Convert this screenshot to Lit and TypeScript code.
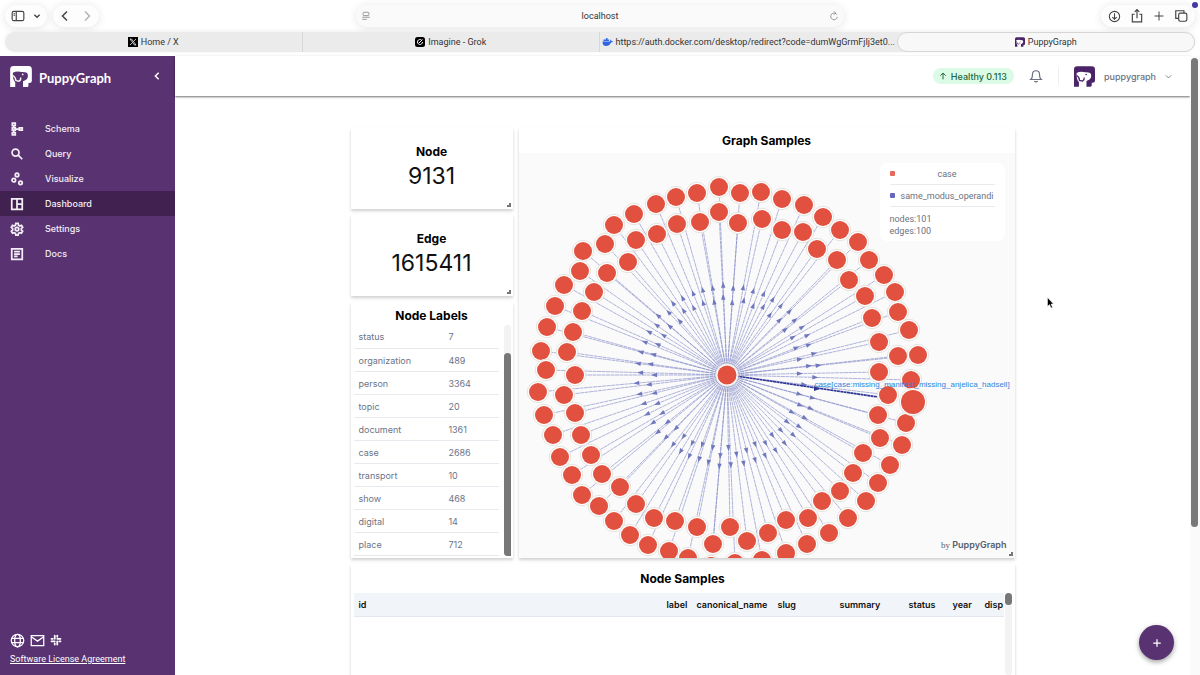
import { LitElement, html, svg, css } from "lit";
import { customElement } from "lit/decorators.js";
import { classMap } from "lit/directives/class-map.js";

const puppy = (fill: string, cut: string) => svg`
  <path fill=${fill} d="M10 0H54Q64 0 64 10V44Q64 50 57 50H54V58Q54 62 50 62H38V46H15V62H0V10Q0 0 10 0Z"/>
  <path fill=${cut} d="M8 20Q20 14 34 18Q50 17 52 25Q54 36 46 41L38 45V47Q26 53 15 48Q7 40 8 20Z"/>
  <path fill="none" stroke=${fill} stroke-width="4" d="M8 28Q16 32 17 43L26 45Q32 42 31 34"/>
  <circle fill=${fill} cx="37" cy="25" r="2.5"/>`;

const CENTER = [727, 375];
const FOCUS = [913, 402];
const NODES: number[][] = [
  [719, 187], [697, 193], [676, 197], [656, 204], [634, 214], [614, 225], [605, 244], [583, 251], [580, 271],
  [564, 285], [555, 306], [547, 327], [541, 351], [719, 212], [738, 223], [740, 193], [761, 192], [762, 219],
  [700, 222], [677, 224], [657, 234], [636, 240], [628, 262], [607, 273], [594, 292], [582, 311], [573, 332],
  [567, 352], [782, 199], [804, 205], [823, 217], [840, 230], [858, 242], [869, 260], [884, 275], [895, 292],
  [898, 312], [909, 330], [782, 230], [803, 232], [817, 249], [837, 260], [849, 280], [865, 296], [872, 318],
  [879, 342], [898, 356], [918, 355], [879, 372], [911, 380], [888, 395], [878, 415], [906, 423], [880, 438],
  [902, 445], [863, 453], [890, 465], [853, 473], [878, 483], [840, 491], [866, 501], [822, 501], [848, 518],
  [808, 518], [829, 533], [786, 520], [807, 544], [768, 533], [786, 553], [762, 560], [546, 370], [575, 375],
  [538, 392], [564, 395], [544, 415], [575, 413], [553, 435], [581, 435], [560, 457], [591, 455], [572, 475],
  [602, 474], [582, 495], [620, 487], [599, 506], [636, 504], [614, 521], [654, 518], [630, 535], [675, 521],
  [648, 545], [697, 527], [669, 551], [688, 558], [713, 544], [730, 527], [711, 566], [735, 563], [747, 541],
];

const LABELS: [string, number][] = [
  ["status", 7], ["organization", 489], ["person", 3364], ["topic", 20], ["document", 1361],
  ["case", 2686], ["transport", 10], ["show", 468], ["digital", 14], ["place", 712],
];

@customElement("sample-graph")
class SampleGraph extends LitElement {
  static styles = css`
    :host { display: block; flex: 1; min-height: 0; position: relative; background: #fafafa; overflow: hidden;
      font-family: Inter, sans-serif; }
    .canvas { display: block; width: 100%; height: 100%; }
    .edge { stroke: #8188c6; stroke-width: 0.7; stroke-opacity: 0.9; stroke-dasharray: 4 0.5; }
    .arrow { fill: #6f77bd; }
    .halo { fill: #fff; stroke: #e6e3de; stroke-width: 1; }
    .dot { fill: #e2513f; }
    .focus { stroke: #2c3494; stroke-width: 1.6; stroke-dasharray: 3 0.4; }
    .tip { font: 8px "Liberation Sans", Arial, sans-serif; fill: #2f86dc; text-anchor: middle; }
    .legend { position: absolute; top: 10px; right: 10px; box-sizing: border-box; width: 125px; padding: 0 10px 4px;
      background: #fff; border-radius: 7px; color: #6b7280; font: 9px/12px Roboto, sans-serif; }
    .key { display: flex; align-items: center; gap: 5px; height: 21px; border-bottom: 1px solid #e8eaee; }
    .key span { flex: 1; text-align: center; }
    .key i { flex: none; width: 5px; height: 5px; border-radius: 1px; background: #e56a5d; }
    .key .blue { background: #6467bd; }
    .counts { padding-top: 6px; }
    .by { position: absolute; right: 8px; bottom: 6px; font-size: 9px; line-height: 14px; font-weight: 600; color: #55606f; }
    .by span { font-family: "Liberation Serif", serif; font-weight: 400; }
  `;
  edge(n: number[]) {
    const dx = n[0] - CENTER[0], dy = n[1] - CENTER[1];
    const a = (Math.atan2(dy, dx) * 180) / Math.PI;
    return svg`<line class="edge" x1=${CENTER[0]} y1=${CENTER[1]} x2=${n[0]} y2=${n[1]}/>
      <path class="arrow" d="M3 0L-3 2.2V-2.2Z" transform="translate(${CENTER[0] + dx * 0.48} ${CENTER[1] + dy * 0.48}) rotate(${a})"/>`;
  }
  node(n: number[], r = 9) {
    return svg`<circle class="halo" cx=${n[0]} cy=${n[1]} r=${r + 1.7}/><circle class="dot" cx=${n[0]} cy=${n[1]} r=${r}/>`;
  }
  render() {
    return html`
      <svg class="canvas" viewBox="519 153 496 405" preserveAspectRatio="xMidYMin slice" role="img" aria-label="Graph samples">
        ${NODES.map((n) => this.edge(n))}
        <line class="focus" x1="736" y1="376" x2="878" y2="397"/>
        <path fill="#2c3494" d="M820 389L814 386V391Z"/>
        ${NODES.map((n) => this.node(n))}
        ${this.node(CENTER, 9.5)}
        ${this.node(FOCUS, 12)}
        <text class="tip" x="912" y="387">case[case:missing_manifest_missing_anjelica_hadsell]</text>
      </svg>
      <div class="legend">
        <div class="key"><i></i><span>case</span></div>
        <div class="key"><i class="blue"></i><span>same_modus_operandi</span></div>
        <div class="counts">nodes:101<br />edges:100</div>
      </div>
      <div class="by"><span>by</span> PuppyGraph</div>`;
  }
}

const NAV = [
  { name: "Schema", icon: svg`<path d="M4 2h5v4H4zM4 10h5v4H4zM4 18h5v4H4zM16 10h5v4h-5zM6.500 6v4M6.500 14v4M9 12h7"/>` },
  { name: "Query", icon: svg`<circle cx="9.500" cy="9.500" r="6"/><path d="M14 14l7 7"/>` },
  { name: "Visualize", icon: svg`<circle cx="6.500" cy="14" r="3"/><circle cx="12" cy="5" r="3"/><circle cx="18" cy="18.500" r="3"/>` },
  { name: "Dashboard", icon: svg`<path d="M3 3h18v18H3zM12 3v18M12 12h9"/>` },
  { name: "Settings", icon: svg`<path d="M10 2.500h4l.6 3 2.200 1.300 2.900-1 2 3.400-2.300 2v2.600l2.300 2-2 3.400-2.900-1-2.200 1.300-.6 3h-4l-.6-3-2.200-1.300-2.900 1-2-3.400 2.300-2v-2.600l-2.300-2 2-3.400 2.900 1 2.200-1.300z"/><circle cx="12" cy="12" r="3"/>` },
  { name: "Docs", icon: svg`<path d="M3 3h18v18H3zM7 8h10M7 12h10M7 16h6"/>` },
];

@customElement("app-root")
class AppRoot extends LitElement {
  static styles = css`
    :host { display: flex; flex-direction: column; height: 100vh; overflow: hidden; position: relative; background: #fff;
      font-family: Inter, sans-serif; font-size: 9px; color: #111; }
    * { box-sizing: border-box; }
    button { font: inherit; color: inherit; border: 0; background: none; padding: 0; display: flex; align-items: center; }
    a { color: inherit; text-decoration: none; }
    svg { display: block; flex: none; }
    h2 { margin: 0; font-size: 12px; line-height: 18px; font-weight: 700; text-align: center; color: #000; }
    .line { fill: none; stroke: currentColor; stroke-width: 2; }
    .toolbar { display: grid; grid-template-columns: 1fr 41% 1fr; align-items: center; height: 32px; padding: 0 5px; color: #444; }
    .side { display: flex; gap: 6px; }
    .side.right { justify-content: flex-end; }
    .pill { display: flex; align-items: center; height: 22px; border-radius: 11px; background: #fdfdfd; box-shadow: 0 1px 8px #0000001c; }
    .pill.panes { gap: 8px; padding: 0 6px; }
    .pill.history { gap: 10px; padding: 0 6px; }
    .pill.tools { gap: 9px; padding: 0 7px; }
    .faint { color: #b5b5b5; }
    .address { display: flex; align-items: center; height: 22px; padding: 0 5px; border-radius: 11px; background: #fafafa;
      box-shadow: 0 1px 8px #0000001c; color: #888; }
    .address input { flex: 1; min-width: 0; border: 0; background: none; text-align: center; font: 9px Roboto, sans-serif; color: #333; }
    .tabs { display: flex; height: 20px; margin: 0 5px; border-radius: 10px; background: #ebebeb; box-shadow: 0 -1px 4px #00000010;
      font-family: Roboto, sans-serif; }
    .tab { flex: 1 1 0; min-width: 0; justify-content: center; gap: 3px; color: #333; border-right: 1px solid #d8d8d8; white-space: nowrap; }
    .tab.plain { border-right: 0; }
    .tab.on { border: 1px solid #d6d6d6; border-radius: 10px; background: #f8f8f8; }
    .page { flex: 1; min-height: 0; display: flex; margin-top: 4px; }
    .sidebar { width: 175px; flex: none; display: flex; flex-direction: column; background: #593271; color: #fff; }
    .brand { display: flex; align-items: center; gap: 7px; height: 40px; margin-bottom: 20px; padding: 0 13px 0 10px; }
    .brand b { flex: 1; padding-top: 4px; font: 700 13px Lato, sans-serif; }
    .nav { flex: 1; display: flex; flex-direction: column; font-weight: 500; }
    .item { display: flex; align-items: center; gap: 21px; height: 25px; padding-left: 10px; color: #f3eef6; }
    .item .line { stroke-width: 3; }
    .item.on { background: #40214f; }
    .foot { padding: 0 10px 10px; }
    .links { display: flex; align-items: center; gap: 5px; height: 16px; margin-bottom: 5px; }
    .foot u { display: block; line-height: 12px; font-family: Roboto, sans-serif; }
    .main { flex: 1; min-width: 0; display: flex; flex-direction: column; }
    .header { display: flex; align-items: center; justify-content: flex-end; height: 40px; flex: none; padding-right: 18px;
      box-shadow: 0 1px 2px #00000090; color: #6b7280; }
    .health { display: flex; align-items: center; gap: 4px; height: 16px; padding: 0 7px 0 6px; border-radius: 8px; background: #dcfbe6;
      color: #22663c; font-weight: 500; }
    .bell { margin: 0 15px; }
    .user { gap: 9px; padding-left: 15px; height: 18px; border-left: 1px solid #eceef1; font-weight: 500; }
    .board { width: 100%; max-width: 664px; margin: 32px auto 0; flex: 1; min-height: 0; display: grid;
      grid-template-columns: 162px 1fr; grid-template-rows: 81px 81px 256px 1fr; gap: 6px; }
    .card { position: relative; display: flex; flex-direction: column; min-height: 0; min-width: 0; background: #fff; box-shadow: 0 2px 3px #00000030; }
    .grip { position: absolute; right: 2px; bottom: 2px; width: 4px; height: 4px; border: solid #777; border-width: 0 2px 2px 0; }
    .stat { align-items: center; justify-content: center; padding-bottom: 4px; }
    .stat output { font-size: 23px; line-height: 30px; color: #111; }
    .labels { padding: 5px 0 2px; }
    .graph { grid-column: 2; grid-row: 1 / 4; }
    .graph h2 { padding: 4px 0 3px; }
    .samples { grid-column: 1 / 3; padding: 6px 3px 0; overflow: hidden; }
    .scroller { flex: 1; min-height: 0; display: flex; }
    .clip { flex: 1; min-width: 0; overflow: hidden; }
    .labels .scroller { padding-left: 3px; gap: 5px; }
    .labels .clip { display: flex; align-items: flex-end; }
    .track { width: 7px; background: #f3f3f3; display: flex; flex-direction: column; border-radius: 4px; }
    .labels .track { justify-content: flex-end; margin-right: 2px; }
    .thumb { height: 88%; border-radius: 4px; background: #777; }
    table { border-collapse: collapse; table-layout: fixed; width: 100%; }
    .labels td { height: 23px; padding: 0 5px; border-bottom: 1px solid #e6e9ed; color: #6a7488; width: 62%; }
    .labels td + td { width: 38%; }
    .samples h2 { margin-bottom: 5px; }
    .samples .track { margin-left: 1px; }
    .samples .thumb { height: 12px; }
    th { height: 23px; padding: 0 0 0 5px; text-align: left; font-weight: 600; background: #f1f4f9; border-bottom: 1px solid #e3e7ee; color: #111; white-space: nowrap; }
    .c2 { width: 30px; } .c3 { width: 81px; } .c4 { width: 62px; }
    .c5 { width: 69px; } .c6 { width: 44px; } .c7 { width: 32px; } .c8 { width: 24px; }
    .rail { width: 10px; padding: 2px 2px 0 1px; flex: none; background: #fafafa; }
    .rail div { height: 76%; border-radius: 4px; background: #797979; }
    .fab { position: absolute; right: 26px; bottom: 15px; width: 35px; height: 35px; border-radius: 50%; justify-content: center;
      background: #593271; color: #fff; box-shadow: 0 2px 5px #00000060; }
    .cursor { position: absolute; left: 1047px; top: 297px; }
    .dot { position: absolute; right: 2px; top: 2px; width: 6px; height: 6px; border-radius: 50%; background: #4338a8; }
  `;
  icon(body: unknown, size = 14, box = "0 0 24 24") {
    return html`<svg class="line" width=${size} height=${size} viewBox=${box}>${body}</svg>`;
  }
  render() {
    return html`
      <div class="toolbar">
        <div class="side">
          <div class="pill panes">
            <button aria-label="Sidebar">${this.icon(svg`<rect x="2" y="4" width="20" height="16" rx="3"/><path d="M9 4v16M4.500 8h2M4.500 11h2"/>`, 14)}</button>
            <button aria-label="Tab groups">${this.icon(svg`<path stroke-width="4" d="M4 8l8 8 8-8"/>`, 8)}</button>
          </div>
          <div class="pill history">
            <button aria-label="Back">${this.icon(svg`<path stroke-width="3" d="M16 3l-9 9 9 9"/>`, 12)}</button>
            <button class="faint" aria-label="Forward">${this.icon(svg`<path stroke-width="3" d="M8 3l9 9-9 9"/>`, 12)}</button>
          </div>
        </div>
        <div class="address">
          ${this.icon(svg`<rect x="5" y="3" width="14" height="8" rx="2"/><path d="M3 15h18M3 20h11"/>`, 10)}
          <input aria-label="Address" value="localhost" />
          <button aria-label="Reload">${this.icon(svg`<path d="M19 9a8 8 0 1 0 1 5M12 1l4 4-4 4"/>`, 10)}</button>
        </div>
        <div class="side right">
          <div class="pill tools">
            <button aria-label="Downloads">${this.icon(svg`<circle cx="12" cy="12" r="9.500"/><path d="M12 6v11M8 13l4 4 4-4"/>`, 13)}</button>
            <button aria-label="Share">${this.icon(svg`<path d="M8 9H4v13h16V9h-4M12 16V2M8 5l4-4 4 4"/>`, 14)}</button>
            <button aria-label="New tab">${this.icon(svg`<path d="M12 3v18M3 12h18"/>`, 12)}</button>
            <button aria-label="Tab overview">${this.icon(svg`<rect x="8" y="7" width="14" height="14" rx="3"/><path d="M17 7V3H3v13h5"/>`, 14)}</button>
          </div>
        </div>
      </div>
      <div class="tabs">
        <button class="tab">
          <svg width="10" height="10" viewBox="0 0 20 20"><path fill="#000" d="M0 0h20v20H0z"/><path fill="none" stroke="#fff" stroke-width="1.500" d="M4 4h3l9 12h-3zM16 4l-5 5M9 11l-5 5"/></svg>Home / X</button>
        <button class="tab">
          <svg width="10" height="10" viewBox="0 0 20 20"><rect width="20" height="20" rx="5"/><path fill="none" stroke="#fff" stroke-width="2" d="M13 6a5 5 0 1 0 2 4M8 12l7-7"/></svg>Imagine - Grok</button>
        <button class="tab plain">
          <svg width="11" height="10" viewBox="0 0 22 20"><path fill="#2f65e0" d="M1 9h15q1-3 0-4 2 0 3 3h3q-1 3-4 3-3 7-10 7-7 0-7-9zM3 5h11v3H3zM8 2h3v3H8z"/></svg>https://auth.docker.com/desktop/redirect?code=dumWgGrmFjIj3et0...</button>
        <button class="tab on">
          <svg width="10" height="10" viewBox="0 0 64 62">${puppy("#4a2467", "#fff")}</svg>PuppyGraph</button>
      </div>
      <div class="page">
        <div class="sidebar">
          <div class="brand">
            <svg width="22" height="21" viewBox="0 0 64 62">${puppy("#fff", "#593271")}</svg>
            <b>PuppyGraph</b>
            <button aria-label="Collapse">${this.icon(svg`<path stroke-width="3.500" d="M16 4l-8 8 8 8"/>`, 10)}</button>
          </div>
          <nav class="nav">
            ${NAV.map((n) => html`<a href="#" class=${classMap({ item: true, on: n.name === "Dashboard" })}>${this.icon(n.icon)}${n.name}</a>`)}
          </nav>
          <div class="foot">
            <div class="links">
              <a href="#" aria-label="Website">${this.icon(svg`<circle cx="12" cy="12" r="10"/><ellipse cx="12" cy="12" rx="4.500" ry="10"/><path d="M3 8.500h18M3 15.500h18"/>`, 15)}</a>
              <a href="#" aria-label="Mail">${this.icon(svg`<path d="M2 4h20v16H2zM2 6l10 7 10-7"/>`, 15)}</a>
              <a href="#" aria-label="Slack">${this.icon(svg`<path stroke-width="3.500" stroke-linecap="round" d="M9.500 3v6.500M3 9.500h2.500M14.500 9.500H21M14.500 3v2.500M14.500 14.500V21M3 14.500h6.500M9.500 18.500V21M18.500 14.500H21"/>`, 12)}</a>
            </div>
            <a href="#"><u>Software License Agreement</u></a>
          </div>
        </div>
        <div class="main">
          <div class="header">
            <span class="health">${this.icon(svg`<path stroke-width="3" d="M12 22V3M4 11l8-8 8 8"/>`, 8)}Healthy 0.113</span>
            <button class="bell" aria-label="Notifications">${this.icon(svg`<path d="M3 18q3-2 3-9a6 6 0 0 1 12 0q0 7 3 9zM9 21q3 2 6 0"/>`, 14)}</button>
            <button class="user">
              <svg width="21" height="21" viewBox="0 0 64 62">${puppy("#4a2467", "#fff")}</svg>puppygraph
              ${this.icon(svg`<path stroke-width="3" d="M3 8l9 9 9-9"/>`, 7)}
            </button>
          </div>
          <div class="board">
            <section class="card stat"><h2>Node</h2><output>9131</output><i class="grip"></i></section>
            <section class="card graph"><h2>Graph Samples</h2><sample-graph></sample-graph><i class="grip"></i></section>
            <section class="card stat"><h2>Edge</h2><output>1615411</output><i class="grip"></i></section>
            <section class="card labels">
              <h2>Node Labels</h2>
              <div class="scroller">
                <div class="clip"><table>${LABELS.map(([k, v]) => html`<tr><td>${k}</td><td>${v}</td></tr>`)}</table></div>
                <div class="track"><div class="thumb"></div></div>
              </div>
              <i class="grip"></i>
            </section>
            <section class="card samples">
              <h2>Node Samples</h2>
              <div class="scroller">
                <div class="clip"><table><thead><tr>
                  ${["id", "label", "canonical_name", "slug", "summary", "status", "year", "disp"].map((c, i) => html`<th class="c${i + 1}">${c}</th>`)}
                </tr></thead></table></div>
                <div class="track"><div class="thumb"></div></div>
              </div>
            </section>
          </div>
        </div>
        <div class="rail"><div></div></div>
      </div>
      <button class="fab" aria-label="Add">${this.icon(svg`<path stroke-width="3" d="M12 3v18M3 12h18"/>`, 10)}</button>
      <svg class="cursor" width="7" height="12" viewBox="0 0 14 24"><path fill="#000" stroke="#fff" d="M1 1v18l4-4 3 7 3-1-3-7h5z"/></svg>
      <i class="dot"></i>`;
  }
}
